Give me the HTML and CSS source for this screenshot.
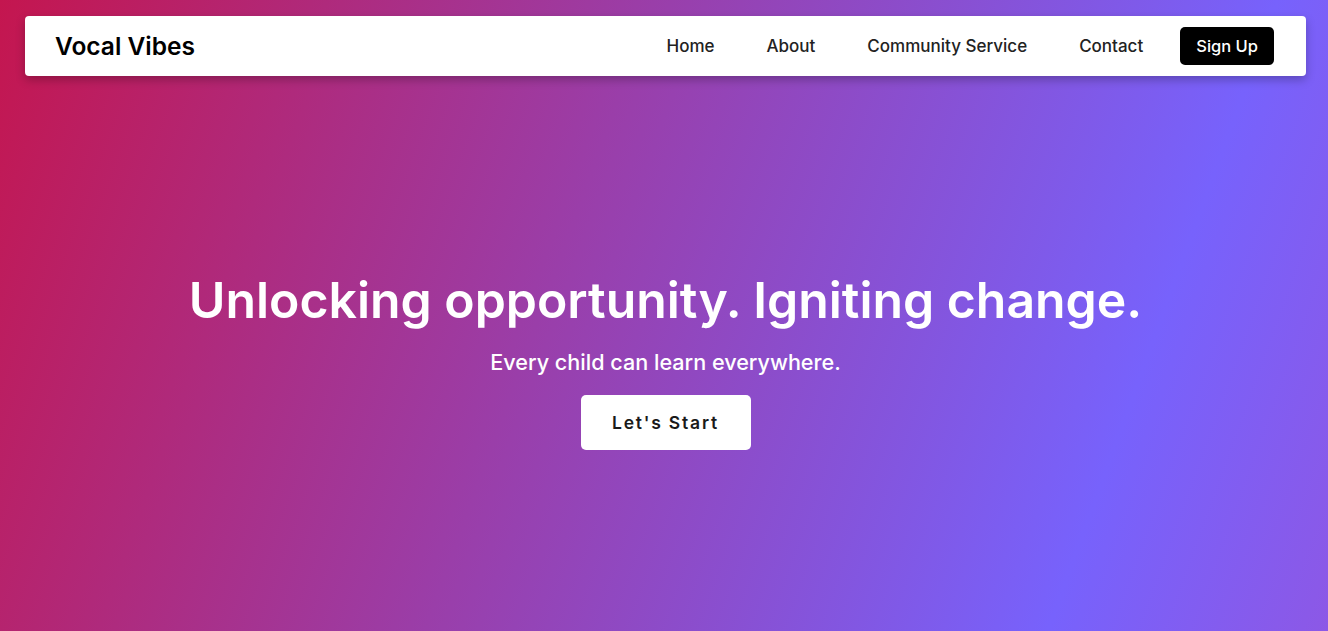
FILE: index.html
```html
<!DOCTYPE html>
<html lang="en">
<head>
<meta charset="utf-8">
<title>Vocal Vibes</title>
<link rel="stylesheet" href="styles.css">
</head>
<body>
<div class="page">
  <header class="navbar">
    <div class="logo">Vocal Vibes</div>
    <nav class="links">
      <a href="#" class="link">Home</a>
      <a href="#" class="link">About</a>
      <a href="#" class="link">Community Service</a>
      <a href="#" class="link">Contact</a>
      <a href="#" class="signup">Sign Up</a>
    </nav>
  </header>
  <section class="hero">
    <h1 class="title">Unlocking opportunity. Igniting change.</h1>
    <p class="subtitle">Every child can learn everywhere.</p>
    <a href="#" class="start">Let's Start</a>
  </section>
</div>
</body>
</html>
```

FILE: styles.css
```css
* { box-sizing: border-box; }
html, body { margin: 0; padding: 0; }
body {
  font-family: "Inter", "Open Sans", sans-serif;
  overflow: hidden;
}
.page {
  height: 631px;
  background: linear-gradient(110deg, #c4164f 0%, #9a3ea9 42%, #7762fc 82%, #8c58e6 100%);
  padding: 16px 22px 0 25px;
  display: flex;
  flex-direction: column;
}
.navbar {
  height: 60px;
  background: #fff;
  border-radius: 4px;
  box-shadow: 0 4px 10px rgba(0,0,0,0.25);
  display: flex;
  align-items: center;
  justify-content: space-between;
  padding: 0 32px 0 30px;
}
.logo {
  font-size: 24.5px;
  font-weight: 600;
  color: #000;
}
.links {
  display: flex;
  align-items: center;
}
.link {
  font-size: 17px;
  font-weight: 500;
  color: #222;
  text-decoration: none;
  margin-right: 52px;
}
.link:nth-child(4) { margin-right: 37px; }
.signup {
  background: #000;
  color: #fff;
  text-decoration: none;
  font-size: 16.5px;
  font-weight: 500;
  height: 38px;
  padding: 0 16px;
  border-radius: 5px;
  display: flex;
  align-items: center;
}
.hero {
  flex: 1;
  display: flex;
  flex-direction: column;
  align-items: center;
  padding-top: 194px;
  color: #fff;
}
.title {
  margin: 0;
  font-size: 49.9px;
  font-weight: 600;
  line-height: 60px;
}
.subtitle {
  margin: 18px 0 0;
  font-size: 21.6px;
  font-weight: 500;
  line-height: 28px;
}
.start {
  margin-top: 19px;
  width: 170px;
  height: 55px;
  background: #fff;
  border-radius: 5px;
  color: #1a1a1a;
  text-decoration: none;
  font-size: 17.5px;
  font-weight: 600;
  letter-spacing: 1.8px;
  display: flex;
  align-items: center;
  justify-content: center;
}
```
